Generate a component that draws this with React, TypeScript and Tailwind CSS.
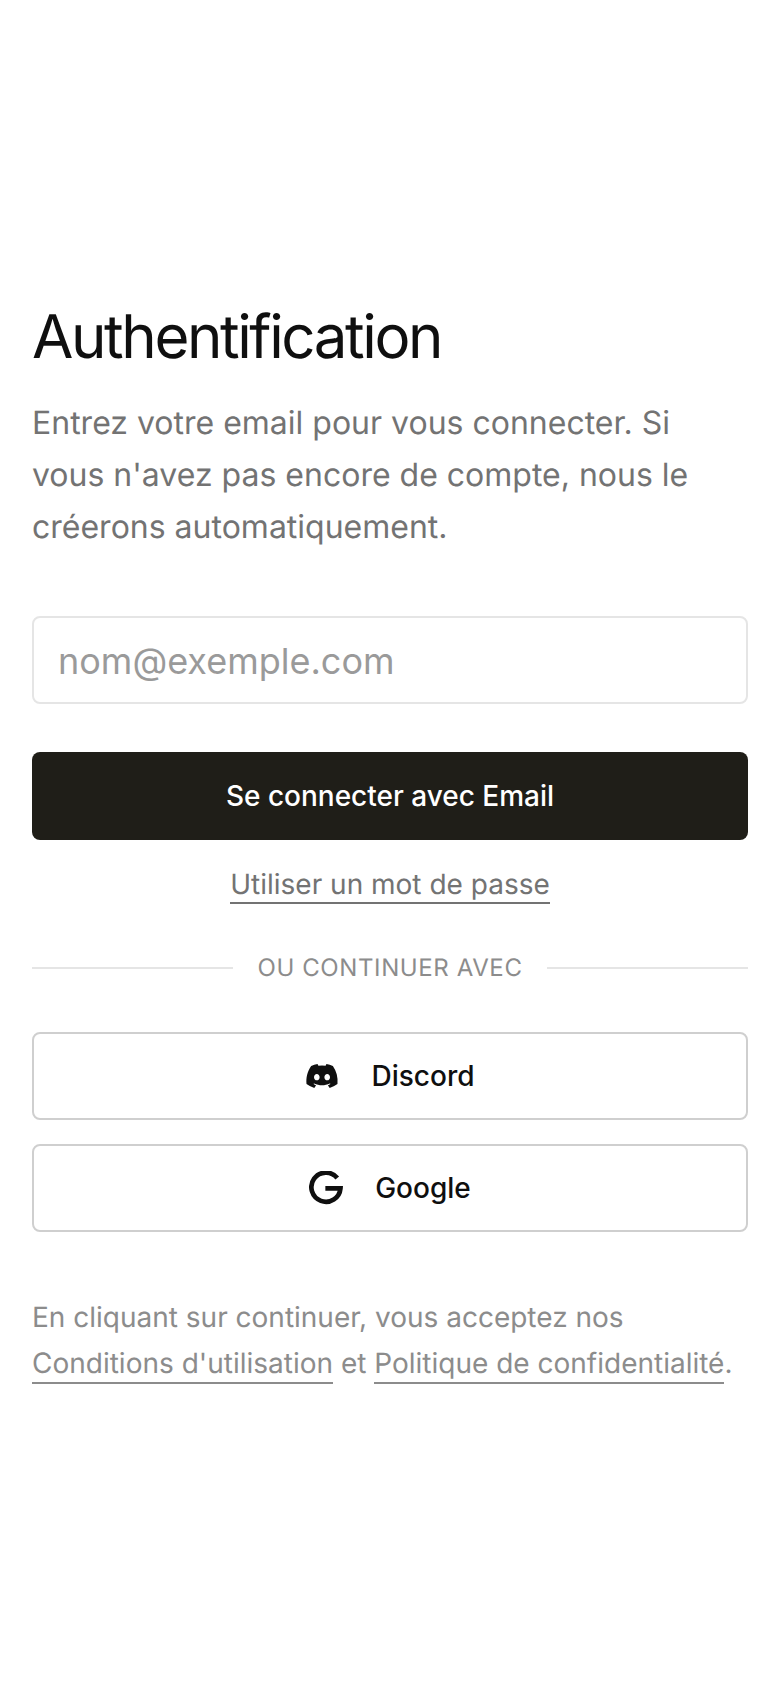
import { FaDiscord } from "react-icons/fa";

function GoogleIcon() {
  return (
    <svg viewBox="0 0 32 32" className="size-[34px]" fill="none" stroke="currentColor" strokeWidth="4.4">
      <path d="M26.6 6.6A13.7 13.7 0 1 0 29.6 16.4H15.4" />
    </svg>
  );
}

function SocialButton({ icon, label }: { icon: React.ReactNode; label: string }) {
  return (
    <button className="flex h-[88px] w-full items-center justify-center gap-8 rounded-lg border-2 border-[#cfcfcf] bg-white text-[28px] font-medium text-[#0f0f0f]">
      {icon}
      {label}
    </button>
  );
}

export default function App() {
  return (
    <div className="flex min-h-[1688px] flex-col justify-center bg-white px-8 pb-[2px] font-['Inter',sans-serif] [text-rendering:geometricPrecision]">
      <h1 className="text-[60px] leading-[72px] font-normal tracking-[-2.4px] text-[#0f0f0f]">
        Authentification
      </h1>
      <p className="mt-6 text-[32px] leading-[52px] text-[#737373]">
        Entrez votre email pour vous connecter. Si vous n'avez pas encore de compte, nous le
        créerons automatiquement.
      </p>
      <input
        placeholder="nom@exemple.com"
        className="mt-[63px] h-[88px] w-full rounded-lg border-2 border-[#e5e5e5] bg-white px-[24px] pt-0.5 text-[36px] placeholder:text-[#9a9a9a]"
      />
      <button className="mt-12 h-[88px] w-full rounded-lg bg-[#1f1e18] text-[28px] font-medium text-white">
        Se connecter avec Email
      </button>
      <a className="mt-[26px] self-center border-b-2 border-[#737373] text-[28px] leading-[36px] text-[#737373]">
        Utiliser un mot de passe
      </a>
      <div className="mt-12 flex items-center gap-6">
        <div className="h-0.5 flex-1 bg-[#e5e5e5]" />
        <span className="text-[24px] leading-8 tracking-[0.6px] text-[#8c8c8c]">OU CONTINUER AVEC</span>
        <div className="h-0.5 flex-1 bg-[#e5e5e5]" />
      </div>
      <div className="mt-12 flex flex-col gap-6">
        <SocialButton icon={<FaDiscord className="size-[34px]" />} label="Discord" />
        <SocialButton icon={<GoogleIcon />} label="Google" />
      </div>
      <p className="mt-[62px] text-[28px] leading-[46px] text-[#8c8c8c]">
        En cliquant sur continuer, vous acceptez nos{" "}
        <a className="border-b-2 border-[#8c8c8c] pb-[2px]">Conditions d'utilisation</a> et{" "}
        <a className="border-b-2 border-[#8c8c8c] pb-[2px]">Politique de confidentialité</a>.
      </p>
    </div>
  );
}
